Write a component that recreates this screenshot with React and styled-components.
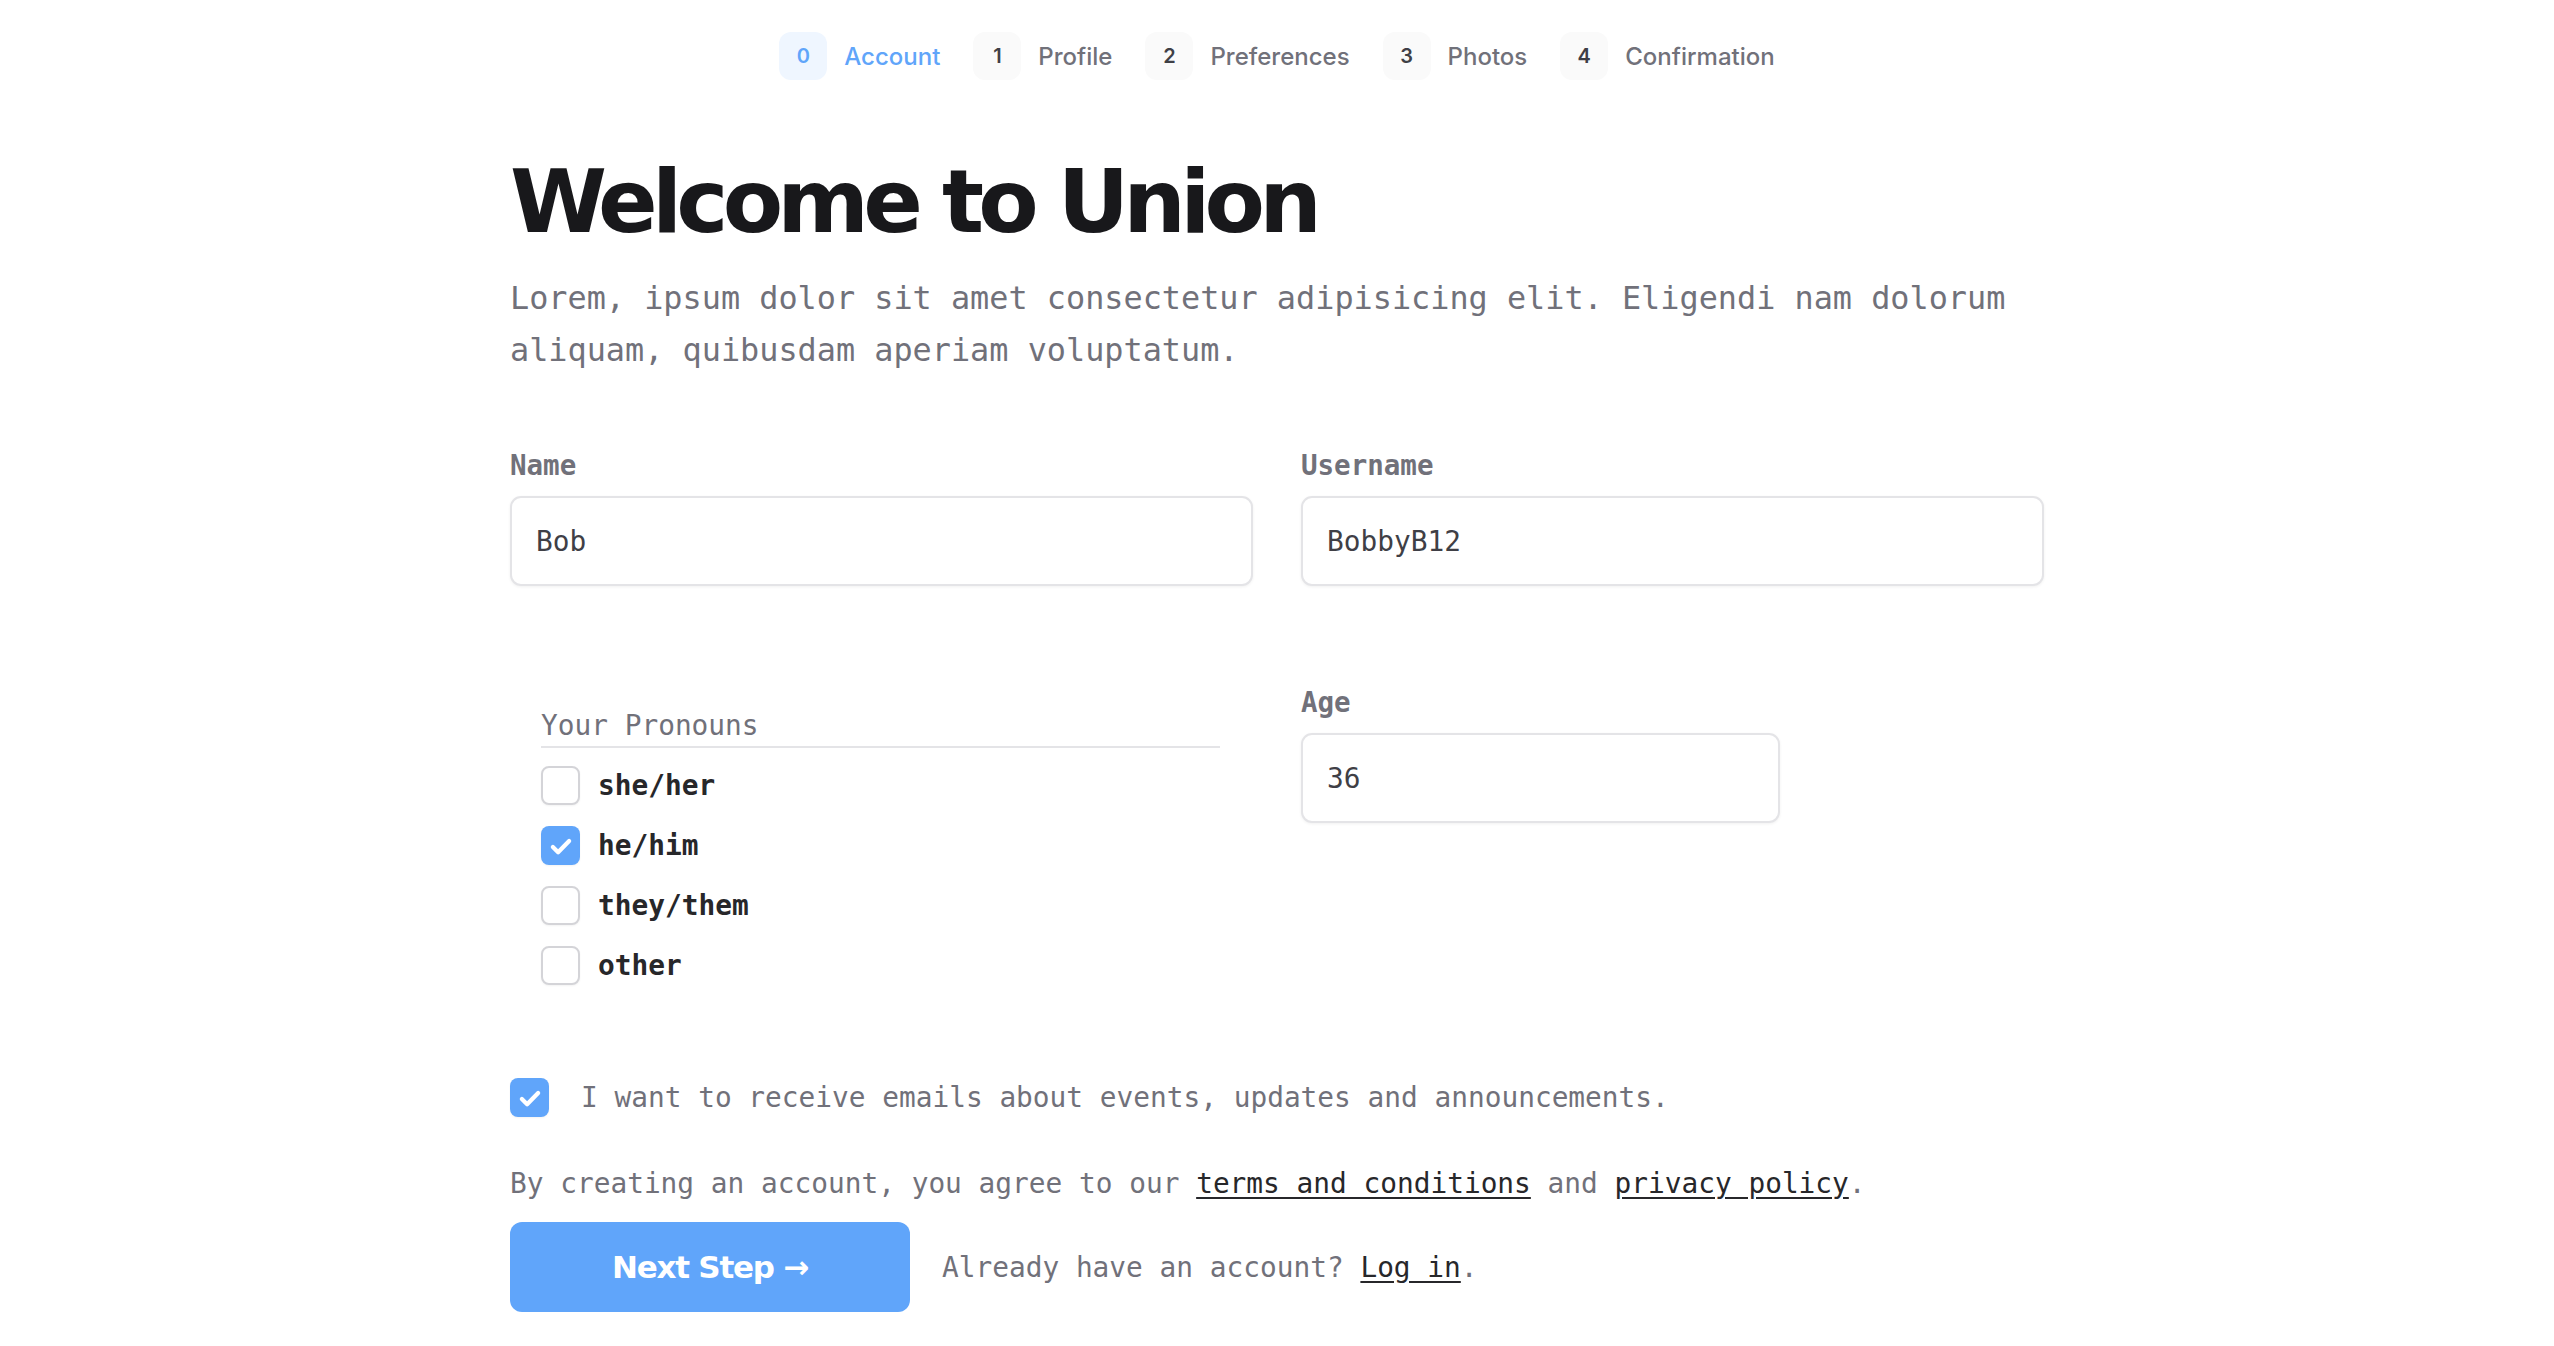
import React, { useState } from 'react';
import styled, { createGlobalStyle } from 'styled-components';

const GlobalStyle = createGlobalStyle`
    body {
        margin: 0;
        background: #ffffff;
        font-family: "DejaVu Sans Mono", "Liberation Mono", monospace;
    }
`

const steps = ['Account', 'Profile', 'Preferences', 'Photos', 'Confirmation'];
const pronouns = ['she/her', 'he/him', 'they/them', 'other'];

function CheckMark() {
    return (
        <svg width="30" height="30" viewBox="0 0 24 24" fill="none">
            <path d="M5.5 12.8l4.2 4.2L18.5 8" stroke="#ffffff" strokeWidth="3.4" strokeLinecap="round" strokeLinejoin="round" />
        </svg>
    )
}

function Checkbox({ checked, onToggle }) {
    return (
        <Box $checked={checked} onClick={onToggle}>
            {checked && <CheckMark />}
        </Box>
    )
}

function App() {

    const [picked, setPicked] = useState({ 'he/him': true });
    const [emails, setEmails] = useState(true);

    const toggle = (p) => {
        setPicked(prev => ({ ...prev, [p]: !prev[p] }));
    }

  return (
    <Page>
        <GlobalStyle />

        <Stepper>
            {steps.map((s, i) => (
                <Step key={s}>
                    <StepNumber $active={i === 0}>{i}</StepNumber>
                    <StepName $active={i === 0}>{s}</StepName>
                </Step>
            ))}
        </Stepper>

        <Content>
            <Title>Welcome to Union</Title>
            <Intro>
                Lorem, ipsum dolor sit amet consectetur adipisicing elit. Eligendi nam dolorum
                aliquam, quibusdam aperiam voluptatum.
            </Intro>

            <FormGrid>
                <Field>
                    <Label>Name</Label>
                    <Input defaultValue="Bob" />
                </Field>
                <Field>
                    <Label>Username</Label>
                    <Input defaultValue="BobbyB12" />
                </Field>

                <PronounGroup>
                    <GroupTitle>Your Pronouns</GroupTitle>
                    <Options>
                        {pronouns.map(p => (
                            <Option key={p}>
                                <Checkbox checked={!!picked[p]} onToggle={() => toggle(p)} />
                                <OptionText>{p}</OptionText>
                            </Option>
                        ))}
                    </Options>
                </PronounGroup>
                <Field>
                    <Label>Age</Label>
                    <AgeInput defaultValue="36" />
                </Field>
            </FormGrid>

            <EmailRow>
                <Checkbox checked={emails} onToggle={() => setEmails(e => !e)} />
                <EmailText>I want to receive emails about events, updates and announcements.</EmailText>
            </EmailRow>

            <Terms>
                By creating an account, you agree to our <Link href="#">terms and conditions</Link> and <Link href="#">privacy policy</Link>.
            </Terms>

            <Actions>
                <NextButton>Next Step →</NextButton>
                <Muted>Already have an account? <Link href="#">Log in</Link>.</Muted>
            </Actions>
        </Content>
    </Page>
  )
}

const Page = styled.div`
    width: 100%;
    min-height: 100vh;
    padding-top: 32px;
    box-sizing: border-box;
`

const Stepper = styled.div`
    display: flex;
    justify-content: center;
    align-items: center;
    gap: 33px;
`

const Step = styled.div`
    display: flex;
    align-items: center;
    gap: 17px;
`

const StepNumber = styled.div`
    width: 48px;
    height: 48px;
    border-radius: 12px;
    display: flex;
    align-items: center;
    justify-content: center;
    font-family: Inter, "Noto Sans", sans-serif;
    font-size: 20px;
    font-weight: 600;
    background: ${p => p.$active ? '#eff6ff' : '#fafafa'};
    color: ${p => p.$active ? '#60a5fa' : '#3f3f46'};
`

const StepName = styled.span`
    font-family: Inter, "Noto Sans", sans-serif;
    font-size: 24px;
    font-weight: 500;
    color: ${p => p.$active ? '#60a5fa' : '#71717a'};
`

const Content = styled.div`
    width: 1534px;
    margin: 0 auto;
`

const Title = styled.h1`
    margin: 78px 0 0;
    font-family: "DejaVu Sans", Inter, sans-serif;
    font-weight: 700;
    font-size: 88px;
    line-height: 88px;
    letter-spacing: -0.066em;
    color: #18181b;
`

const Intro = styled.p`
    margin: 26px 0 0;
    max-width: 1534px;
    font-size: 31.85px;
    line-height: 52px;
    color: #71717a;
`

const FormGrid = styled.div`
    margin-top: 69px;
    display: grid;
    grid-template-columns: 1fr 1fr;
    column-gap: 48px;
    row-gap: 96px;
    align-items: start;
`

const Field = styled.div`
    display: flex;
    flex-direction: column;
    gap: 11px;
`

const Label = styled.label`
    font-size: 27.5px;
    line-height: 40px;
    font-weight: 700;
    color: #71717a;
`

const Input = styled.input`
    box-sizing: border-box;
    width: 100%;
    height: 90px;
    padding: 0 24px;
    border: 2px solid #e4e4e7;
    border-radius: 11px;
    box-shadow: 0 1px 3px rgba(0, 0, 0, 0.06);
    font-family: "DejaVu Sans Mono", monospace;
    font-size: 27.8px;
    color: #3f3f46;
    background: #fff;
    outline: none;
`

const AgeInput = styled(Input)`
    width: 479px;
`

const PronounGroup = styled.div`
    padding: 24px 33px 0 31px;
`

const GroupTitle = styled.div`
    font-size: 27.8px;
    line-height: 40px;
    font-weight: 500;
    color: #71717a;
    border-bottom: 2px solid #e4e4e7;
`

const Options = styled.div`
    margin-top: 18px;
    display: flex;
    flex-direction: column;
    gap: 21px;
`

const Option = styled.div`
    display: flex;
    align-items: center;
    gap: 18px;
`

const Box = styled.div`
    box-sizing: border-box;
    width: 39px;
    height: 39px;
    flex-shrink: 0;
    border-radius: 8px;
    display: flex;
    align-items: center;
    justify-content: center;
    cursor: pointer;
    border: ${p => p.$checked ? 'none' : '2px solid #d4d4d8'};
    background: ${p => p.$checked ? '#60a5fa' : '#ffffff'};
    box-shadow: 0 1px 2px rgba(0, 0, 0, 0.05);
`

const OptionText = styled.span`
    font-size: 27.8px;
    font-weight: 700;
    color: #27272a;
`

const EmailRow = styled.div`
    margin-top: 93px;
    display: flex;
    align-items: center;
    gap: 32px;
`

const EmailText = styled.span`
    font-size: 27.8px;
    color: #71717a;
`

const Terms = styled.p`
    margin: 47px 0 0;
    font-size: 27.8px;
    line-height: 40px;
    color: #71717a;
`

const Link = styled.a`
    color: #27272a;
    text-decoration: underline;
    text-underline-offset: 4px;
`

const Actions = styled.div`
    margin-top: 18px;
    display: flex;
    align-items: center;
    gap: 32px;
`

const NextButton = styled.button`
    width: 400px;
    height: 90px;
    border: none;
    border-radius: 12px;
    background: #60a5fa;
    color: #ffffff;
    font-family: "DejaVu Sans", Inter, sans-serif;
    font-weight: 700;
    font-size: 31px;
    letter-spacing: -0.04em;
    cursor: pointer;
`

const Muted = styled.span`
    font-size: 27.8px;
    color: #71717a;
`

export default App;
